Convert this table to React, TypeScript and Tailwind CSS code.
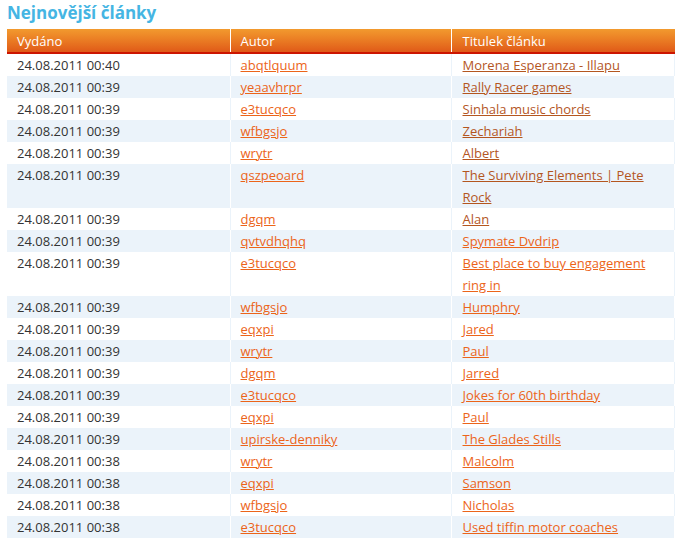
const rows: [string, string, string, boolean][] = [
  ["24.08.2011 00:40", "abqtlquum", "Morena Esperanza - Illapu", true],
  ["24.08.2011 00:39", "yeaavhrpr", "Rally Racer games", true],
  ["24.08.2011 00:39", "e3tucqco", "Sinhala music chords", true],
  ["24.08.2011 00:39", "wfbgsjo", "Zechariah", true],
  ["24.08.2011 00:39", "wrytr", "Albert", true],
  ["24.08.2011 00:39", "qszpeoard", "The Surviving Elements | Pete Rock", true],
  ["24.08.2011 00:39", "dgqm", "Alan", true],
  ["24.08.2011 00:39", "qvtvdhqhq", "Spymate Dvdrip", false],
  ["24.08.2011 00:39", "e3tucqco", "Best place to buy engagement ring in", false],
  ["24.08.2011 00:39", "wfbgsjo", "Humphry", false],
  ["24.08.2011 00:39", "eqxpi", "Jared", false],
  ["24.08.2011 00:39", "wrytr", "Paul", false],
  ["24.08.2011 00:39", "dgqm", "Jarred", false],
  ["24.08.2011 00:39", "e3tucqco", "Jokes for 60th birthday", false],
  ["24.08.2011 00:39", "eqxpi", "Paul", false],
  ["24.08.2011 00:39", "upirske-denniky", "The Glades Stills", false],
  ["24.08.2011 00:38", "wrytr", "Malcolm", false],
  ["24.08.2011 00:38", "eqxpi", "Samson", false],
  ["24.08.2011 00:38", "wfbgsjo", "Nicholas", false],
  ["24.08.2011 00:38", "e3tucqco", "Used tiffin motor coaches", false],
];

export default function App() {
  return (
    <div
      className="bg-white pl-[7px] pr-[2px] pt-[1px] text-[13px] text-[#333]"
      style={{ fontFamily: '"Open Sans", "DejaVu Sans", sans-serif' }}
    >
      <h2 className="text-[17px] font-bold leading-[24px] text-[#45b5e3] mb-[4px]">
        Nejnovější články
      </h2>
      <table className="w-full border-collapse">
        <thead>
          <tr className="bg-gradient-to-b from-[#f29a2e] to-[#df5617] text-white">
            <th className="w-[223px] border-r border-white border-b-2 border-b-[#cc1500] h-[24px] pl-[10px] text-left font-normal leading-[22px]">
              Vydáno
            </th>
            <th className="w-[221px] border-r border-white border-b-2 border-b-[#cc1500] pl-[10px] text-left font-normal leading-[22px]">
              Autor
            </th>
            <th className="border-b-2 border-b-[#cc1500] pl-[11px] text-left font-normal leading-[22px]">
              Titulek článku
            </th>
          </tr>
        </thead>
        <tbody>
          {rows.map(([date, author, title, visited], i) => {
            const odd = i % 2 === 1;
            return (
              <tr key={i} className={odd ? "bg-[#ebf3fa]" : "bg-white"}>
                <td
                  className={`align-top pl-[10px] leading-[22px] border-r ${odd ? "border-white" : "border-[#ebf3fa]"}`}
                >
                  {date}
                </td>
                <td
                  className={`align-top pl-[10px] leading-[22px] border-r ${odd ? "border-white" : "border-[#ebf3fa]"}`}
                >
                  <a href="#" className="text-[#ec6419] underline">
                    {author}
                  </a>
                </td>
                <td
                  className={`align-top pl-[11px] pr-[14px] leading-[22px] border-r ${odd ? "border-white" : "border-[#ebf3fa]"}`}
                >
                  <a
                    href="#"
                    className={`underline ${visited ? "text-[#b4561f]" : "text-[#ec6419]"}`}
                  >
                    {title}
                  </a>
                </td>
              </tr>
            );
          })}
        </tbody>
      </table>
    </div>
  );
}
